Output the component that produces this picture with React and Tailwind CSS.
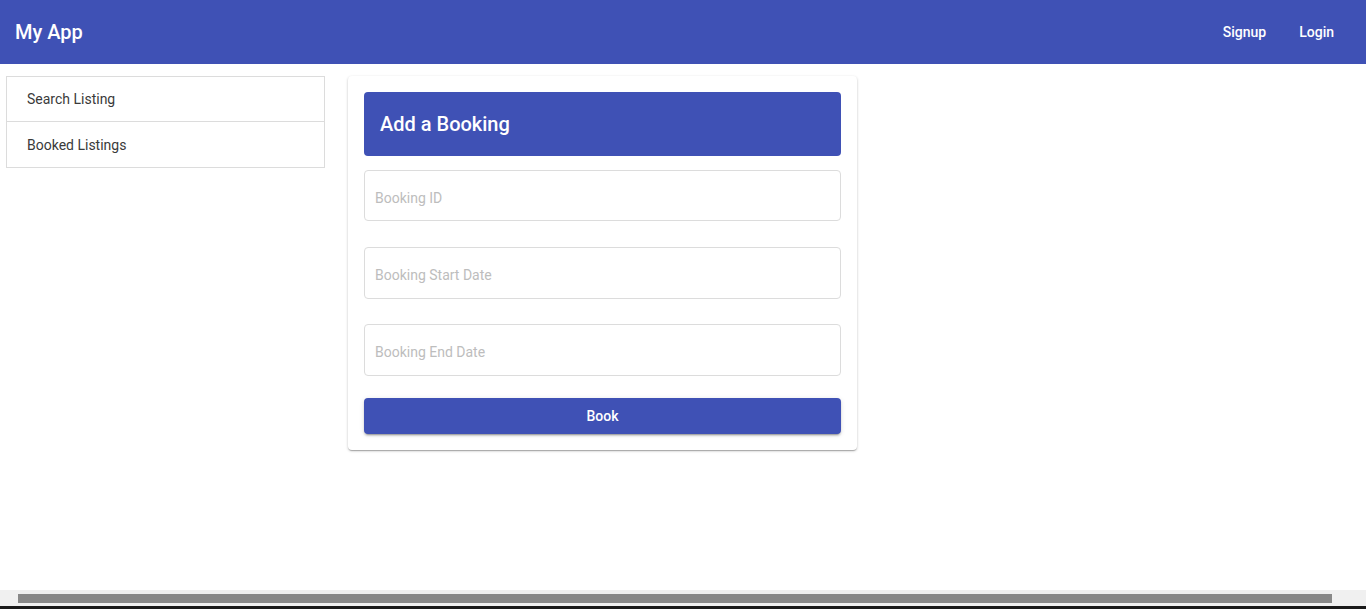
import React from 'react';

const Field = ({ placeholder, className }) => (
  <input
    placeholder={placeholder}
    className={`w-full rounded border border-[#dcdcdc] px-[10px] pt-1 text-sm text-[#333] placeholder:text-[#bdbdbd] outline-none ${className || ''}`}
  />
);

const App = () => {
  return (
    <div className="min-h-[609px] flex flex-col bg-white font-['Roboto',sans-serif]">
      {/* Top bar */}
      <header className="h-16 bg-[#3f51b5] flex items-center justify-between pl-[15px] pr-6 text-white">
        <h1 className="text-xl font-medium">My App</h1>
        <nav className="flex items-center gap-[17px]">
          <button className="px-2 py-1.5 text-sm font-medium">Signup</button>
          <button className="px-2 py-1.5 text-sm font-medium">Login</button>
        </nav>
      </header>

      <main className="flex items-start pt-3 pl-[6px]">
        {/* Sidebar */}
        <aside className="w-[319px] flex flex-col">
          <button className="h-[46px] border border-[#dcdcdc] text-left pl-5 text-sm text-[#3a3a3a]">
            Search Listing
          </button>
          <button className="h-[46px] border border-t-0 border-[#dcdcdc] text-left pl-5 text-sm text-[#3a3a3a]">
            Booked Listings
          </button>
        </aside>

        {/* Booking card */}
        <section className="ml-[23px] w-[509px] bg-white rounded shadow-[0_1px_3px_rgba(0,0,0,0.2),0_1px_1px_rgba(0,0,0,0.14),0_2px_1px_-1px_rgba(0,0,0,0.12)] p-4 flex flex-col">
          <div className="h-16 rounded bg-[#3f51b5] flex items-center px-4">
            <h2 className="text-xl font-medium text-white">Add a Booking</h2>
          </div>
          <Field placeholder="Booking ID" className="mt-[14px] h-[51px]" />
          <Field placeholder="Booking Start Date" className="mt-[26px] h-[52px]" />
          <Field placeholder="Booking End Date" className="mt-[25px] h-[52px]" />
          <button className="mt-[22px] h-9 rounded bg-[#3f51b5] text-white text-sm font-medium shadow-[0_3px_1px_-2px_rgba(0,0,0,0.2),0_2px_2px_rgba(0,0,0,0.14),0_1px_5px_rgba(0,0,0,0.12)]">
            Book
          </button>
        </section>
      </main>

      <div className="flex-1" />

      {/* Horizontal scrollbar */}
      <div className="h-4 bg-[#f0f0f0] flex items-center pl-[18px] pr-[34px]">
        <div className="h-[9px] w-full bg-[#888]" />
      </div>
      <div className="h-[3px] bg-[#1a1a1a]" />
    </div>
  );
};

export default App;
